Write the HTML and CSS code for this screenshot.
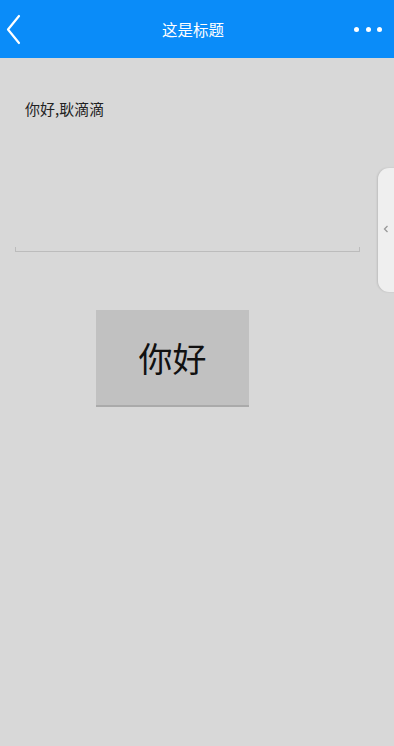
FILE: index.html
```html
<!DOCTYPE html>
<html>
<head>
<meta charset="utf-8">
<link rel="stylesheet" href="styles.css">
</head>
<body>
<div class="app">
  <header class="bar">
    <svg class="back" width="20" height="32" viewBox="0 0 20 32"><path d="M14 3 L3 16.5 L14 30" fill="none" stroke="#fff" stroke-width="2.2" stroke-linecap="round" stroke-linejoin="round"/></svg>
    <div class="title">这是标题</div>
    <div class="dots"><i></i><i></i><i></i></div>
  </header>
  <main class="content">
    <p class="greet">你好,耿滴滴</p>
    <div class="field"></div>
    <div class="btnrow"><button class="btn">你好</button></div>
  </main>
  <div class="handle">
    <svg width="6" height="8" viewBox="0 0 6 8"><path d="M4.5 1 L1.5 4 L4.5 7" fill="none" stroke="#999" stroke-width="1.3"/></svg>
  </div>
</div>
</body>
</html>
```
FILE: styles.css
```css
* { box-sizing: border-box; }
html, body { margin: 0; padding: 0; }
body {
  width: 394px; height: 746px; overflow: hidden;
  background: #d8d8d8;
  font-family: "Noto Sans CJK SC", "Noto Sans", sans-serif;
}
.app { position: relative; width: 394px; height: 746px; background: #d8d8d8; }
.bar {
  height: 58px; background: #0a8cf9;
  display: flex; align-items: center; justify-content: space-between;
  padding: 0 12px 0 5px;
  position: relative;
}
.back { display: block; }
.title {
  position: absolute; left: 0; right: 8px; top: 0; height: 58px;
  display: flex; align-items: center; justify-content: center;
  color: #fff; font-size: 15.5px; pointer-events: none;
}
.dots { display: flex; gap: 6.5px; }
.dots i { display: block; width: 5px; height: 5px; border-radius: 50%; background: #fff; }
.content { padding: 0; }
.greet {
  margin: 0; padding: 40px 0 0 25px;
  font-size: 15px; line-height: 22px; color: #222;
}
.field {
  margin: 127px 0 0 15px; width: 345px; height: 5px;
  border: 1.5px solid #bcbcbc; border-top: none;
}
.btnrow { padding: 58px 0 0 96px; }
.btn {
  width: 153px; height: 97px; border: none; margin: 0; padding: 0;
  background: #c1c1c1; border-bottom: 2px solid #aaa;
  font-family: "Noto Sans CJK SC", sans-serif; font-size: 34px; color: #111;
}
.handle {
  position: absolute; left: 378px; top: 168px; width: 24px; height: 124px;
  background: #efefef; border-radius: 11px 0 0 11px;
  box-shadow: -1px 0 2px rgba(0,0,0,0.12);
  display: flex; align-items: center; padding-left: 5px;
}
.handle svg { margin-top: -2px; display: block; }
```
